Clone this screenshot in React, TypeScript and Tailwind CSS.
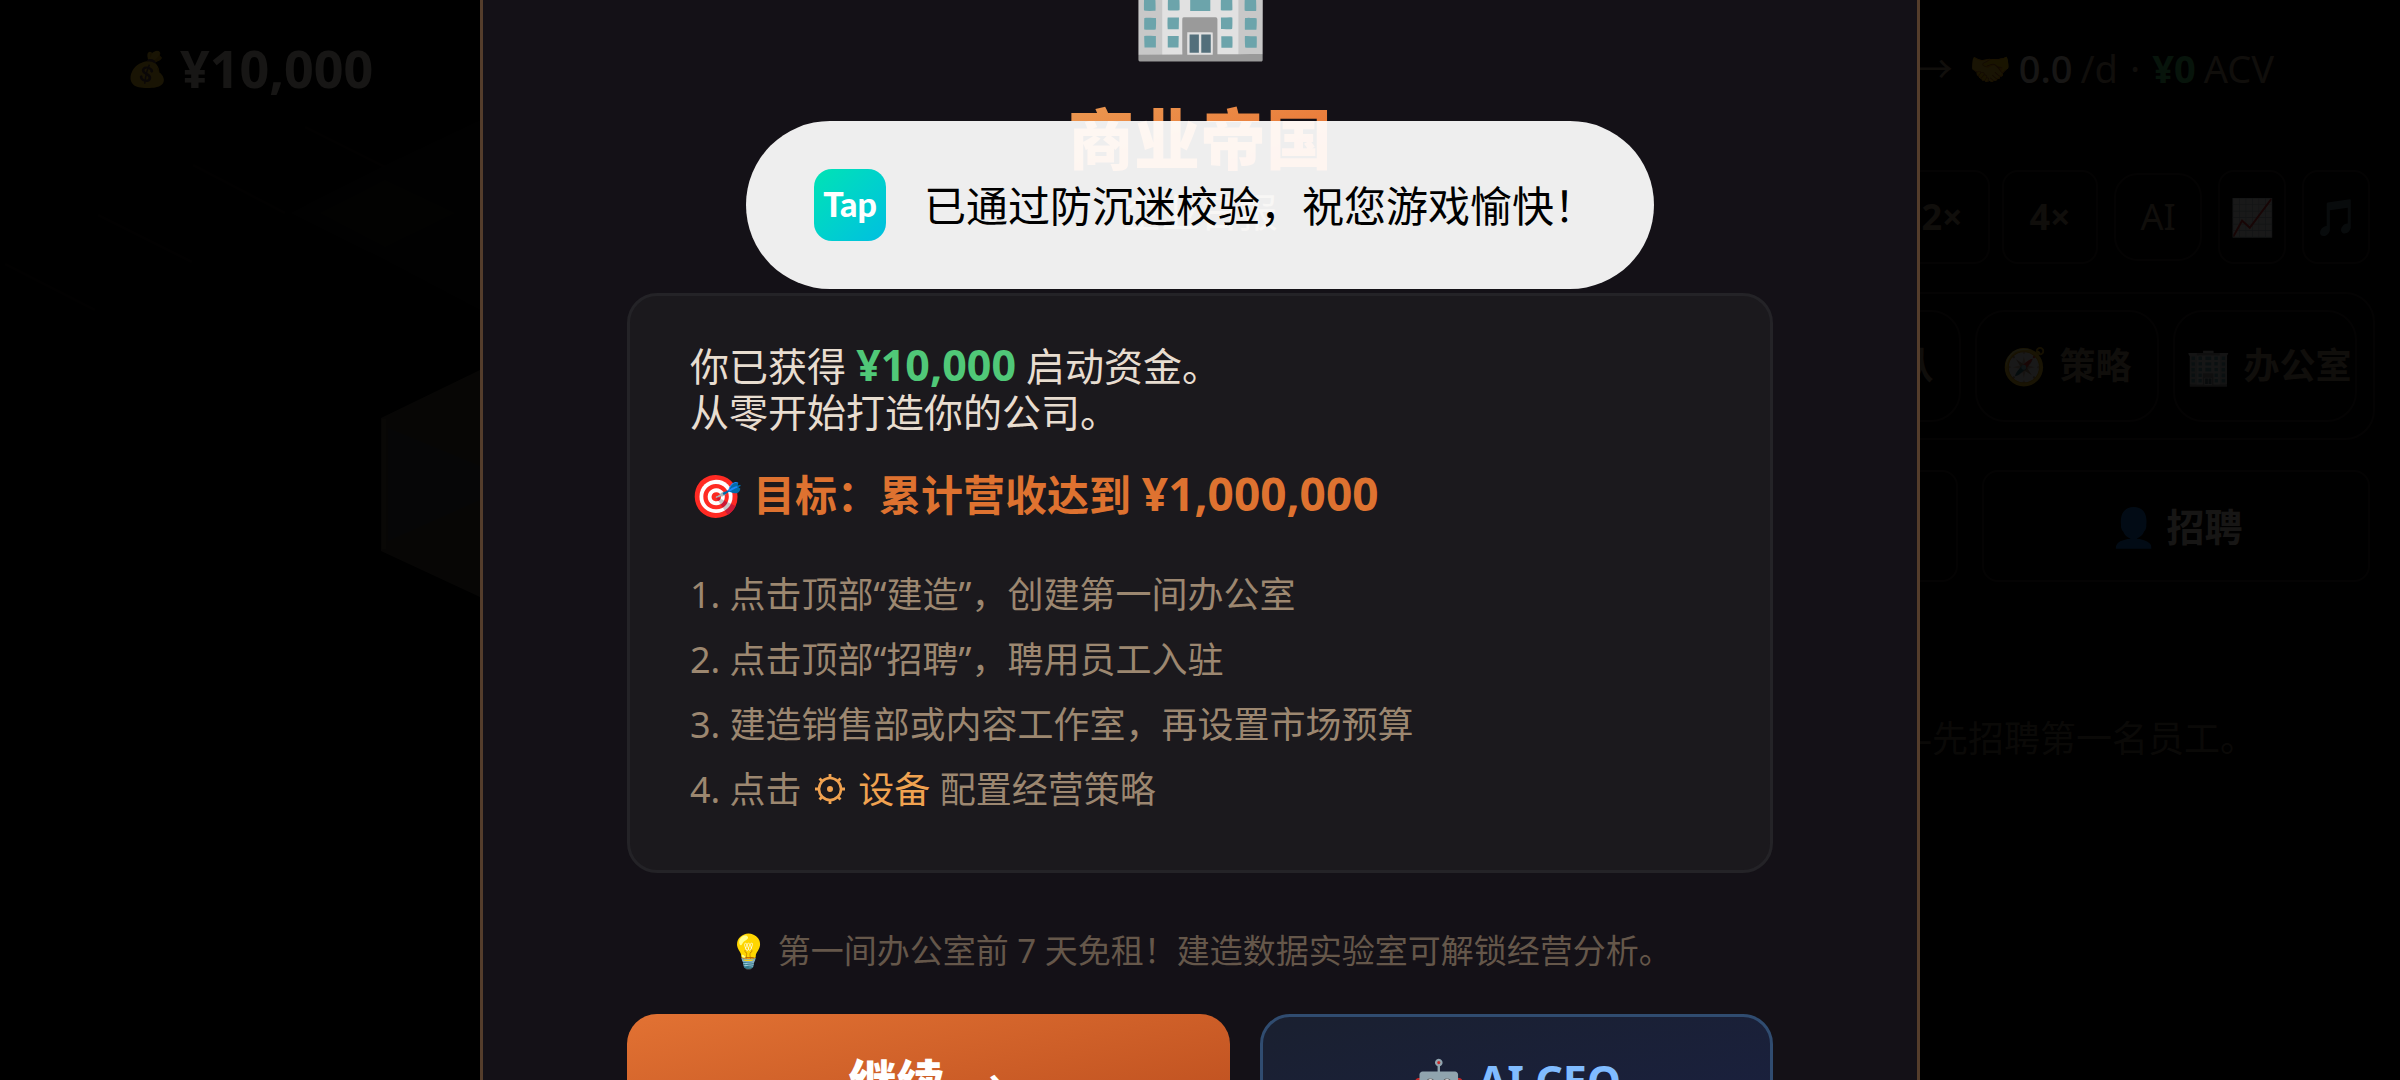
import type { ReactNode } from 'react'
import { clsx } from 'clsx'

const STEPS: ReactNode[] = [
  '点击顶部“建造”，创建第一间办公室',
  '点击顶部“招聘”，聘用员工入驻',
  '建造销售部或内容工作室，再设置市场预算',
  <>
    点击 <GearIcon /> <span className="text-[#f0a250]">设备</span> 配置经营策略
  </>,
]

function App() {
  return (
    <div className="relative h-screen overflow-hidden bg-black font-['Noto_Sans','Noto_Sans_CJK_SC',sans-serif] text-[#e8ddd0]">
      <OfficeFloor />
      <Hud />
      <div className="absolute inset-0 flex items-center justify-center bg-black/90">
        <WelcomeDialog />
      </div>
      <Toast />
    </div>
  )
}

function OfficeFloor() {
  return (
    <svg viewBox="0 0 2400 1080" className="absolute inset-0 size-full" aria-hidden="true">
      <path d="M290 213 385 165 480 120V310L385 260z" fill="#0c0c0c" />
      <path
        d="M5 264 95 310M98 215 192 262M193 165 285 213M305 127 385 167"
        fill="none"
        stroke="#14110c"
        strokeWidth="3"
      />
      <path d="M320 213 385 180 455 213 385 247z" fill="#1a1810" />
      <path d="M381 418 480 370V597L381 551z" fill="#4a4338" />
      <path d="M388 428 480 466V500L388 541z" fill="#40434a" />
      <path d="M384 419V549" stroke="#5c5344" strokeWidth="4" />
    </svg>
  )
}

function HudButton({ className, children }: { className?: string; children: ReactNode }) {
  return (
    <button
      type="button"
      className={clsx('flex shrink-0 items-center justify-center border-2 border-[#2c2522] whitespace-nowrap', className)}
    >
      {children}
    </button>
  )
}

function Hud() {
  return (
    <div className="relative">
      <header className="flex h-[136px] items-center justify-between pr-[126px] pl-[126px]">
        <div className="flex items-center gap-3">
          <span className="text-[34px] leading-10">💰</span>
          <span className="text-[52px] font-bold">¥10,000</span>
        </div>
        <div className="flex items-center gap-2 text-[38px] text-[#a08b76]">
          <span>→</span>
          <span className="ml-2 text-[34px]">🤝</span>
          <span className="font-medium text-[#e8ddd0]">0.0</span>
          <span>/d</span>
          <span className="mx-1">·</span>
          <b className="text-[#4ecb71]">¥0</b>
          <span>ACV</span>
        </div>
      </header>

      <div className="mt-[34px] ml-auto w-[660px] pr-[25px]">
        <div className="mr-[5px] flex items-center justify-end gap-4 text-4xl text-[#a08b76]">
          <HudButton className="h-[94px] w-24 rounded-2xl font-bold">2×</HudButton>
          <HudButton className="-ml-1 h-[94px] w-24 rounded-2xl font-bold">4×</HudButton>
          <HudButton className="size-[88px] rounded-3xl">AI</HudButton>
          <HudButton className="h-[94px] w-[68px] rounded-2xl">📈</HudButton>
          <HudButton className="h-[94px] w-[68px] rounded-2xl">🎵</HudButton>
        </div>
        <nav className="mt-7 flex justify-end gap-[14px] rounded-[30px] border-2 border-[#2c2522] p-4 text-4xl font-bold text-[#a08b76]">
          <HudButton className="h-28 w-[184px] gap-3 rounded-[30px]">
            <span>👥</span> 团队
          </HudButton>
          <HudButton className="h-28 w-[184px] gap-3 rounded-[30px]">
            <span>🧭</span> 策略
          </HudButton>
          <HudButton className="h-28 w-[184px] gap-3 rounded-[30px] pl-2">
            <span>🏢</span> 办公室
          </HudButton>
        </nav>
        <div className="mt-[30px] mr-[5px] flex gap-6 text-[38px] font-bold">
          <HudButton className="h-28 w-[218px] rounded-2xl">🏗 建造</HudButton>
          <HudButton className="h-28 grow rounded-2xl">👤 招聘</HudButton>
        </div>
        <p className="mt-[137px] pr-[119px] text-right text-4xl text-[#6a5a4a]">—先招聘第一名员工。</p>
      </div>
    </div>
  )
}

function WelcomeDialog() {
  return (
    <section
      role="dialog"
      aria-labelledby="welcome-title"
      className="flex w-3/5 shrink-0 flex-col items-center border-[3px] border-[#543d2b] bg-[#141117] px-36 pt-[81px] pb-[90px]"
    >
      <span className="text-[120px] leading-[136px]">🏢</span>
      <h1
        id="welcome-title"
        className="mt-10 bg-linear-to-br from-[#eb9a52] to-[#e86a2c] bg-clip-text text-[66px] leading-[80px] font-black text-transparent"
      >
        商业帝国
      </h1>
      <p className="mt-[10px] text-[39px] leading-[48px] text-[#9c8770]">企业日报</p>

      <div className="mt-[57px] w-full rounded-[30px] border-[3px] border-[#242327] bg-[#1b191d] px-[60px] pt-[47px] pb-12">
        <p className="text-[39px] leading-[46px]">
          你已获得 <b className="text-[43px] leading-none text-[#50c878]">¥10,000</b> 启动资金。
          <br />
          从零开始打造你的公司。
        </p>
        <p className="mt-[30px] text-[42px] leading-[60px] font-bold text-[#de7230]">
          🎯 目标：累计营收达到 <span className="text-[46px] leading-none">¥1,000,000</span>
        </p>
        <ol className="mt-[37px] text-4xl leading-[65px] text-[#9c8770]">
          {STEPS.map((step, i) => (
            <li key={i}>
              {i + 1}. {step}
            </li>
          ))}
        </ol>
      </div>

      <p className="mt-[54px] text-[33px] leading-[48px] text-[#65574a]">
        💡 第一间办公室前 7 天免租！建造数据实验室可解锁经营分析。
      </p>

      <div className="mt-[39px] flex w-full gap-[30px]">
        <button
          type="button"
          className="flex h-[136px] flex-25 items-center justify-center gap-4 rounded-[30px] bg-linear-to-br from-[#e27233] to-[#b84a1c] text-5xl font-black text-white"
        >
          继续
          <span className="pt-2 font-bold">→</span>
        </button>
        <button
          type="button"
          className="h-[136px] flex-21 rounded-[30px] border-[3px] border-[#304c70] bg-linear-to-br from-[#1a2030] to-[#1a2040] text-[43px] font-bold text-[#80bcff]"
        >
          🤖 AI CEO
        </button>
      </div>
    </section>
  )
}

function GearIcon() {
  return (
    <svg viewBox="0 0 30 30" className="mx-1 mb-2 inline size-[30px] text-[#f0a250]" aria-hidden="true">
      <circle cx="15" cy="15" r="11" fill="none" stroke="currentColor" strokeWidth="2.6" />
      <circle cx="15" cy="15" r="3" fill="currentColor" />
      <path
        d="M15 0V4M15 26V30M0 15H4M26 15H30M4.5 4.5 7 7M23 23 25.5 25.5M4.5 25.5 7 23M23 7 25.5 4.5"
        stroke="currentColor"
        strokeWidth="2.8"
      />
    </svg>
  )
}

function Toast() {
  return (
    <div
      role="status"
      className="absolute inset-x-0 top-[121px] mx-auto flex h-[168px] w-fit items-center gap-[38px] rounded-full bg-white/93 pr-[58px] pl-[68px] text-black"
    >
      <span className="flex size-[72px] items-center justify-center rounded-[18px] bg-linear-to-br from-[#00e3b4] to-[#00bfe0] pb-1 font-['Lato',sans-serif] text-[34px] font-black text-white">
        Tap
      </span>
      <span className="text-[42px]">已通过防沉迷校验，祝您游戏愉快！</span>
    </div>
  )
}

export default App
